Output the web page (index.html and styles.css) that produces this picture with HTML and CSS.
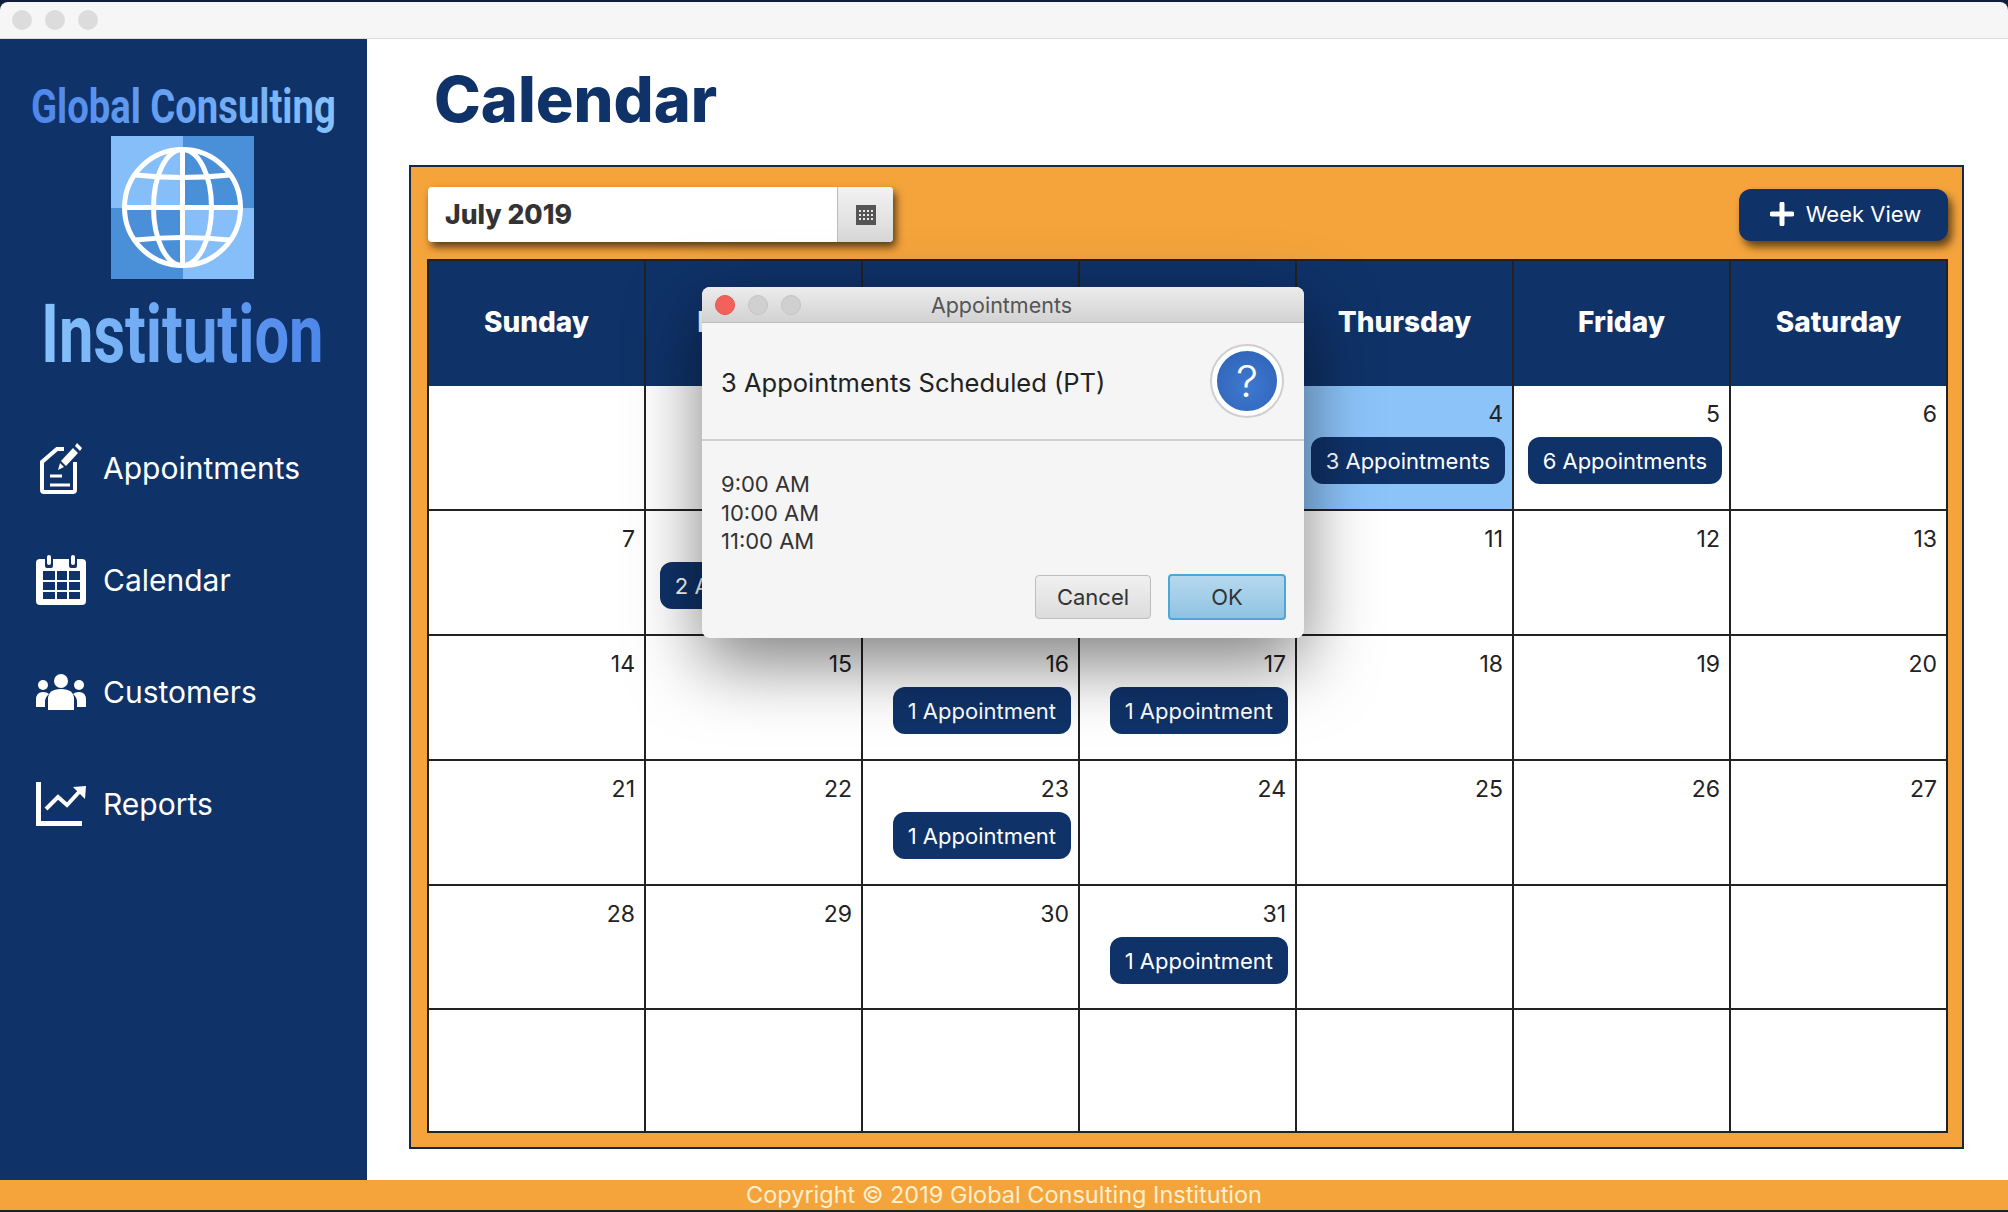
FILE: index.html
```html
<!DOCTYPE html>
<html>
<head>
    <title>Global Consulting Institution - Calendar</title>
    <link rel="stylesheet" href="styles.css">
</head>
<body>
    <div class="titlebar">
        <span class="light"></span>
        <span class="light"></span>
        <span class="light"></span>
    </div>

    <div class="main">
        <aside class="sidebar">
            <svg class="logo" viewBox="0 0 367 348" width="367" height="348">
                <defs>
                    <linearGradient id="logoTop" x1="0" x2="1" y1="0" y2="0">
                        <stop offset="0" stop-color="#4d86ea"/>
                        <stop offset="1" stop-color="#86c2fb"/>
                    </linearGradient>
                    <linearGradient id="logoBottom" x1="0" x2="1" y1="0" y2="0">
                        <stop offset="0" stop-color="#86c2fb"/>
                        <stop offset="1" stop-color="#4d86ea"/>
                    </linearGradient>
                </defs>
                <text class="logo-text" transform="translate(31 84) scale(0.78 1)" font-size="49" fill="url(#logoTop)">Global Consulting</text>
                <rect x="111" y="97" width="72" height="72" fill="#85bef9"/>
                <rect x="183" y="97" width="71" height="72" fill="#4a90d9"/>
                <rect x="111" y="169" width="72" height="71" fill="#4a90d9"/>
                <rect x="183" y="169" width="71" height="71" fill="#85bef9"/>
                <g fill="none" stroke="#fff" stroke-width="5">
                    <circle cx="182.5" cy="168.5" r="58"/>
                    <ellipse cx="182.5" cy="168.5" rx="29" ry="58"/>
                    <path d="M182.5 110V227M125 168.5H240"/>
                    <path d="M135 136Q182.5 141 230 136M135 201Q182.5 196 230 201"/>
                </g>
                <text class="logo-text" transform="translate(41 323) scale(1.025 1.367)" font-size="60" fill="url(#logoBottom)">Institution</text>
            </svg>

            <nav class="nav">
                <a class="nav-item" href="#appointments">
                    <span class="nav-icon">
                        <svg viewBox="0 0 42 51" width="42" height="51">
                            <path d="M24 6H17L2 19V47Q2 49 4 49H33Q35 49 35 47V19" fill="none" stroke="#fff" stroke-width="4"/>
                            <path d="M10 33H22M10 42H30" stroke="#fff" stroke-width="3"/>
                            <path d="M33 5L38 10L26 23L21 18ZM20 20L24 24L18 27Z" fill="#fff"/>
                            <path d="M35 3L37 0L42 5L40 8Z" fill="#fff"/>
                        </svg>
                    </span>
                    Appointments
                </a>
                <a class="nav-item" href="#calendar">
                    <span class="nav-icon">
                        <svg viewBox="0 0 50 50" width="50" height="50">
                            <rect x="0" y="4" width="50" height="46" rx="4" fill="#fff"/>
                            <rect x="9" y="0" width="8" height="13" rx="2" fill="#0f3268"/>
                            <rect x="33" y="0" width="8" height="13" rx="2" fill="#0f3268"/>
                            <rect x="11" y="0" width="4" height="10" rx="2" fill="#fff"/>
                            <rect x="35" y="0" width="4" height="10" rx="2" fill="#fff"/>
                            <path d="M7 16H19V25H7ZM21 16H31V25H21ZM33 16H44V25H33ZM7 27H19V35H7ZM21 27H31V35H21ZM33 27H44V35H33ZM7 37H19V44H7ZM21 37H31V44H21ZM33 37H44V44H33Z" fill="#0f3268"/>
                        </svg>
                    </span>
                    Calendar
                </a>
                <a class="nav-item" href="#customers">
                    <span class="nav-icon">
                        <svg viewBox="0 0 50 36" width="50" height="36" fill="#fff">
                            <circle cx="25" cy="7" r="7"/>
                            <path d="M12 36V25Q12 15 25 15Q38 15 38 25V36Z"/>
                            <circle cx="7" cy="11" r="5"/>
                            <circle cx="43" cy="11" r="5"/>
                            <path d="M0 33V26Q0 18 7 18Q11 18 13 20Q9 23 9 28V33Z"/>
                            <path d="M50 33V26Q50 18 43 18Q39 18 37 20Q41 23 41 28V33Z"/>
                        </svg>
                    </span>
                    Customers
                </a>
                <a class="nav-item" href="#reports">
                    <span class="nav-icon">
                        <svg viewBox="0 0 50 44" width="50" height="44">
                            <path d="M2.5 0V41.5H46" fill="none" stroke="#fff" stroke-width="5"/>
                            <path d="M10 27L22 15L31 23L44 9" fill="none" stroke="#fff" stroke-width="4"/>
                            <path d="M37 5L50 4L49 17Z" fill="#fff"/>
                        </svg>
                    </span>
                    Reports
                </a>
            </nav>
        </aside>

        <main class="content">
            <h1 class="page-title">Calendar</h1>

            <section class="panel">
                <div class="toolbar">
                    <div class="date-picker">
                        <span class="date-value">July 2019</span>
                        <span class="date-button">
                            <svg viewBox="0 0 20 20" width="20" height="20">
                                <rect width="20" height="20" fill="#555"/>
                                <path d="M3 5H5V7H3ZM7 5H9V7H7ZM11 5H13V7H11ZM15 5H17V7H15ZM3 9H5V11H3ZM7 9H9V11H7ZM11 9H13V11H11ZM15 9H17V11H15ZM3 13H5V15H3ZM7 13H9V15H7ZM11 13H13V15H11ZM15 13H17V15H15Z" fill="#e8e8e8"/>
                            </svg>
                        </span>
                    </div>
                    <button class="week-button">
                        <svg viewBox="0 0 24 24" width="24" height="24">
                            <path d="M12 2V22M2 12H22" stroke="#fff" stroke-width="5" stroke-linecap="round"/>
                        </svg>
                        Week View
                    </button>
                </div>

                <div class="calendar">
                    <div class="day-head">Sunday</div>
                    <div class="day-head">Monday</div>
                    <div class="day-head">Tuesday</div>
                    <div class="day-head">Wednesday</div>
                    <div class="day-head">Thursday</div>
                    <div class="day-head">Friday</div>
                    <div class="day-head">Saturday</div>

                    <div class="cell"></div>
                    <div class="cell"><span class="num">1</span></div>
                    <div class="cell"><span class="num">2</span></div>
                    <div class="cell"><span class="num">3</span></div>
                    <div class="cell today"><span class="num">4</span><span class="badge">3 Appointments</span></div>
                    <div class="cell"><span class="num">5</span><span class="badge">6 Appointments</span></div>
                    <div class="cell"><span class="num">6</span></div>

                    <div class="cell"><span class="num">7</span></div>
                    <div class="cell"><span class="num">8</span><span class="badge">2 Appointments</span></div>
                    <div class="cell"><span class="num">9</span></div>
                    <div class="cell"><span class="num">10</span></div>
                    <div class="cell"><span class="num">11</span></div>
                    <div class="cell"><span class="num">12</span></div>
                    <div class="cell"><span class="num">13</span></div>

                    <div class="cell"><span class="num">14</span></div>
                    <div class="cell"><span class="num">15</span></div>
                    <div class="cell"><span class="num">16</span><span class="badge">1 Appointment</span></div>
                    <div class="cell"><span class="num">17</span><span class="badge">1 Appointment</span></div>
                    <div class="cell"><span class="num">18</span></div>
                    <div class="cell"><span class="num">19</span></div>
                    <div class="cell"><span class="num">20</span></div>

                    <div class="cell"><span class="num">21</span></div>
                    <div class="cell"><span class="num">22</span></div>
                    <div class="cell"><span class="num">23</span><span class="badge">1 Appointment</span></div>
                    <div class="cell"><span class="num">24</span></div>
                    <div class="cell"><span class="num">25</span></div>
                    <div class="cell"><span class="num">26</span></div>
                    <div class="cell"><span class="num">27</span></div>

                    <div class="cell"><span class="num">28</span></div>
                    <div class="cell"><span class="num">29</span></div>
                    <div class="cell"><span class="num">30</span></div>
                    <div class="cell"><span class="num">31</span><span class="badge">1 Appointment</span></div>
                    <div class="cell"></div>
                    <div class="cell"></div>
                    <div class="cell"></div>

                    <div class="cell"></div>
                    <div class="cell"></div>
                    <div class="cell"></div>
                    <div class="cell"></div>
                    <div class="cell"></div>
                    <div class="cell"></div>
                    <div class="cell"></div>
                </div>
            </section>
        </main>
    </div>

    <footer class="footer">Copyright © 2019 Global Consulting Institution</footer>

    <!-- appointments popup -->
    <div class="dialog">
        <div class="dialog-title">
            <span class="dot red"></span>
            <span class="dot"></span>
            <span class="dot"></span>
            <span class="dialog-name">Appointments</span>
        </div>
        <div class="dialog-head">
            <span class="dialog-msg">3 Appointments Scheduled (PT)</span>
            <span class="help">?</span>
        </div>
        <div class="dialog-body">
            <div>9:00 AM</div>
            <div>10:00 AM</div>
            <div>11:00 AM</div>
        </div>
        <div class="dialog-buttons">
            <button class="btn">Cancel</button>
            <button class="btn btn-ok">OK</button>
        </div>
    </div>
</body>
</html>
```

FILE: styles.css
```css
* {
    box-sizing: border-box;
}
body {
    margin: 0;
    height: 1212px;
    overflow: hidden;
    display: flex;
    flex-direction: column;
    background-color: #101f3c;
    font-family: 'Inter', sans-serif;
    color: #222;
}
.titlebar {
    height: 37px;
    margin-top: 2px;
    padding-left: 12px;
    display: flex;
    align-items: center;
    gap: 13px;
    background-color: #f6f6f6;
    border-bottom: 1px solid #dcdcdc;
    border-radius: 8px 8px 0 0;
    flex-shrink: 0;
}
.light {
    width: 20px;
    height: 20px;
    border-radius: 50%;
    background-color: #dcdcdc;
}
.main {
    flex: 1;
    display: flex;
    min-height: 0;
}
.sidebar {
    width: 367px;
    background-color: #0f3268;
    flex-shrink: 0;
}
.logo {
    display: block;
}
.logo-text {
    font-family: 'Roboto', sans-serif;
    font-weight: 700;
}
.nav {
    margin-top: 25px;
}
.nav-item {
    height: 112px;
    padding-left: 36px;
    display: flex;
    align-items: center;
    gap: 17px;
    color: white;
    text-decoration: none;
    font-size: 30px;
}
.nav-icon {
    width: 50px;
    display: flex;
    justify-content: center;
}
.content {
    flex: 1;
    padding: 0 44px 31px 42px;
    background-color: white;
    display: flex;
    flex-direction: column;
}
.page-title {
    height: 126px;
    margin: 0;
    padding: 0 0 6px 25px;
    display: flex;
    align-items: center;
    color: #0f3268;
    font-size: 63px;
    font-weight: 800;
}
.panel {
    flex: 1;
    padding: 20px 14px 14px 16px;
    background-color: #f5a43c;
    border: 2px solid #14294a;
    display: flex;
    flex-direction: column;
}
.toolbar {
    height: 55px;
    margin-bottom: 17px;
    display: flex;
    justify-content: space-between;
    align-items: center;
}
.date-picker {
    width: 465px;
    height: 55px;
    margin-left: 1px;
    display: flex;
    background-color: white;
    border-radius: 4px;
    box-shadow: 3px 5px 8px rgba(0, 0, 0, 0.65);
}
.date-value {
    flex: 1;
    padding: 0 0 2px 17px;
    display: flex;
    align-items: center;
    color: #333;
    font-size: 26.5px;
    font-weight: 800;
}
.date-button {
    width: 56px;
    display: flex;
    align-items: center;
    justify-content: center;
    background: linear-gradient(#f2f2f2, #d8d8d8);
    border-left: 1px solid #bbb;
    border-radius: 0 4px 4px 0;
}
.week-button {
    width: 209px;
    height: 52px;
    padding: 0 0 2px 4px;
    display: flex;
    align-items: center;
    justify-content: center;
    gap: 12px;
    color: white;
    background-color: #0f3268;
    border: none;
    border-radius: 12px;
    box-shadow: 4px 6px 8px rgba(0, 0, 0, 0.6);
    font-family: 'Inter', sans-serif;
    font-size: 22px;
}
.calendar {
    flex: 1;
    display: grid;
    grid-template-columns: repeat(7, 1fr);
    grid-template-rows: 125px repeat(4, 125px) repeat(2, 1fr);
    background-color: white;
    border-top: 2px solid #222;
    border-left: 2px solid #222;
}
.day-head {
    padding-bottom: 3px;
    display: flex;
    align-items: center;
    justify-content: center;
    background-color: #0f3268;
    border-right: 2px solid #222;
    color: white;
    font-size: 28px;
    font-weight: 800;
}
.cell {
    padding: 15px 7px 0 0;
    display: flex;
    flex-direction: column;
    align-items: flex-end;
    border-right: 2px solid #222;
    border-bottom: 2px solid #222;
}
.cell.today {
    background-color: #8cc4fa;
}
.num {
    height: 27px;
    padding-right: 2px;
    font-size: 23px;
    line-height: 27px;
}
.badge {
    height: 47px;
    margin-top: 9px;
    padding: 0 15px;
    display: flex;
    align-items: center;
    color: white;
    background-color: #0f3268;
    border-radius: 12px;
    font-size: 22px;
    white-space: nowrap;
}
.footer {
    height: 32px;
    padding-bottom: 2px;
    display: flex;
    align-items: center;
    justify-content: center;
    color: #fdf0d0;
    background-color: #f5a43c;
    border-bottom: 2px solid #222;
    font-size: 23.5px;
    flex-shrink: 0;
}
.dialog {
    position: absolute;
    left: 702px;
    top: 287px;
    width: 602px;
    height: 351px;
    background-color: #f5f5f5;
    border-radius: 8px;
    box-shadow: 0 25px 70px rgba(0, 0, 0, 0.5);
    display: flex;
    flex-direction: column;
}
.dialog-title {
    height: 36px;
    padding-left: 13px;
    display: flex;
    align-items: center;
    gap: 13px;
    position: relative;
    background: linear-gradient(#ececec, #d2d2d2);
    border-bottom: 1px solid #bbb;
    border-radius: 8px 8px 0 0;
}
.dot {
    width: 20px;
    height: 20px;
    border-radius: 50%;
    background-color: #d0d0d0;
    border: 1px solid #c4c4c4;
}
.dot.red {
    background-color: #f2615a;
    border-color: #e5534c;
}
.dialog-name {
    position: absolute;
    left: -3px;
    right: 0;
    text-align: center;
    color: #555;
    font-size: 21.5px;
}
.dialog-head {
    height: 118px;
    padding: 0 21px 0 19px;
    display: flex;
    align-items: center;
    justify-content: space-between;
    border-bottom: 2px solid #d0d0d0;
    font-size: 25.5px;
}
.dialog-msg {
    padding-top: 2px;
}
.help {
    width: 72px;
    height: 72px;
    display: flex;
    align-items: center;
    justify-content: center;
    color: white;
    background: radial-gradient(circle at 50% 60%, #3f78d0, #2c62b4);
    border: 6px solid white;
    outline: 2px solid #cfcfcf;
    outline-offset: -1px;
    border-radius: 50%;
    font-size: 44px;
    font-weight: 300;
}
.dialog-body {
    padding: 29px 19px 0;
    font-size: 22px;
    line-height: 28.5px;
    color: #333;
}
.dialog-buttons {
    margin-top: 18px;
    padding-right: 18px;
    display: flex;
    justify-content: flex-end;
    align-items: center;
    gap: 17px;
}
.btn {
    width: 116px;
    height: 44px;
    color: #333;
    background: linear-gradient(#f0f0f0, #dcdcdc);
    border: 1px solid #bdbdbd;
    border-radius: 4px;
    font-family: 'Inter', sans-serif;
    font-size: 22px;
}
.btn-ok {
    width: 118px;
    height: 46px;
    background: linear-gradient(#b5d9ee, #8fc3e2);
    border: 2px solid #4ea6d8;
}
```
